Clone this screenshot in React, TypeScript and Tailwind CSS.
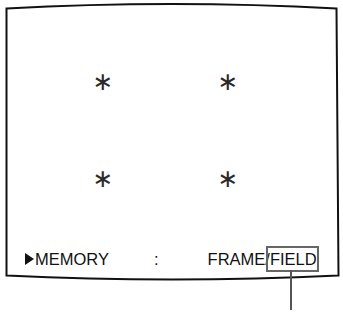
const STARS = [0, 1];

function Star() {
  return (
    <span className="flex h-[24px] w-[24px] items-center justify-center font-['DejaVu_Sans',sans-serif] text-[25px] leading-none text-[#2a2a2a]">
      ∗
    </span>
  );
}

function StarRow({ className }: { className?: string }) {
  return (
    <div className={`flex gap-[101px] pl-[91px] ${className ?? ""}`}>
      {STARS.map((i) => (
        <Star key={i} />
      ))}
    </div>
  );
}

export default function App() {
  return (
    <div className="relative h-[312px] w-[343px] overflow-hidden bg-white font-['Liberation_Sans',Arial,sans-serif] text-[#111]">
      {/* monitor outline */}
      <svg
        className="absolute inset-0"
        width="343"
        height="312"
        viewBox="0 0 343 312"
        fill="none"
        aria-hidden="true"
      >
        <path
          d="M6.5 8.5 Q171.5 -0.5 336.5 8.5 L338.5 275.5 Q172 283.5 6.5 275.5 Z"
          stroke="#111"
          strokeWidth="2"
        />
      </svg>

      <div className="relative flex flex-col pt-[69px]">
        <StarRow />
        <StarRow className="mt-[73px]" />

        <div className="mt-[57px] flex h-[24px] items-center pl-[25px] text-[16.5px] leading-[24px]">
          <svg width="9" height="12" viewBox="0 0 9 12" className="mr-[1px]" aria-hidden="true">
            <path d="M0 0 L9 6 L0 12 Z" fill="#111" />
          </svg>
          <span>MEMORY</span>
          <span className="ml-[45px]">:</span>
          <span className="ml-[49px]">FRAME/</span>
          <span className="relative">
            FIELD
            <span className="absolute -bottom-[1px] -left-[4px] -right-[2px] -top-[1px] border-2 border-[#666]" />
            <span className="absolute left-[20px] top-[23px] h-[40px] w-[2px] bg-[#555]" />
          </span>
        </div>
      </div>
    </div>
  );
}
